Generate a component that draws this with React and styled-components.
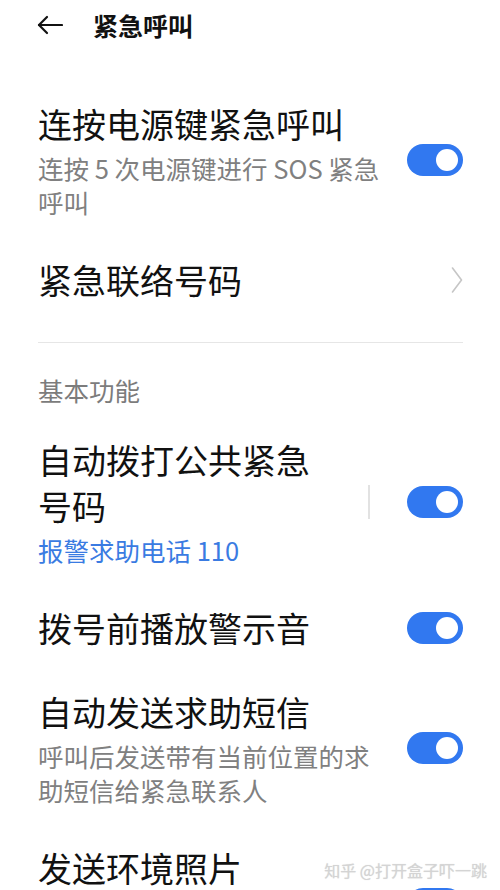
import React from 'react';
import styled, { createGlobalStyle } from 'styled-components';

const GlobalStyle = createGlobalStyle`
  html, body {
    margin: 0;
    padding: 0;
    background: #ffffff;
  }
  body {
    font-family: "Noto Sans CJK SC", "Noto Sans", sans-serif;
    color: #111111;
  }
`;

const Page = styled.div`
  position: relative;
  width: 500px;
  height: 890px;
  overflow: hidden;
  background: #ffffff;
`;

const Header = styled.div`
  display: flex;
  align-items: center;
  height: 50px;
  padding-left: 37px;
`;

const BackButton = styled.div`
  display: flex;
  align-items: center;
  width: 26px;
  height: 26px;
  margin-right: 30px;
`;

const HeaderTitle = styled.h1`
  margin: 0;
  font-size: 25px;
  font-weight: 700;
  line-height: 34px;
  color: #111111;
`;

const Content = styled.div`
  padding-top: 32px;
`;

const Row = styled.div`
  display: flex;
  align-items: center;
  padding: 19px 37px 19px 38px;
`;

const TextCol = styled.div`
  flex: 1;
  min-width: 0;
  padding-right: ${({ $pr }) => $pr || 24}px;
`;

const Title = styled.div`
  font-size: 34px;
  line-height: 46px;
  color: #111111;
`;

const Sub = styled.div`
  margin-top: 4px;
  font-size: 25.5px;
  line-height: 34px;
  color: ${({ $blue }) => ($blue ? '#3a7be2' : '#808080')};
`;

const Divider = styled.div`
  height: 1px;
  margin: 20px 37px 0 38px;
  background: #e6e6e6;
`;

const SectionTitle = styled.div`
  margin: 30px 0 11px 38px;
  font-size: 25.5px;
  line-height: 34px;
  color: #7c7c7c;
`;

const VSep = styled.div`
  width: 2px;
  height: 34px;
  margin-right: 37px;
  background: #e2e2e2;
`;

const Switch = styled.div`
  flex: 0 0 auto;
  display: flex;
  align-items: center;
  justify-content: ${({ $on }) => ($on ? 'flex-end' : 'flex-start')};
  width: 56px;
  height: 32px;
  padding: 0 5px;
  box-sizing: border-box;
  border-radius: 16px;
  background: ${({ $on }) => ($on ? '#3178f0' : '#d9d9d9')};
`;

const Knob = styled.div`
  width: 22px;
  height: 22px;
  border-radius: 50%;
  background: #ffffff;
`;

const Chevron = styled.div`
  display: flex;
  align-items: center;
  width: 12px;
`;

const Watermark = styled.div`
  position: absolute;
  right: 13px;
  top: 858px;
  font-size: 16px;
  line-height: 24px;
  color: #d4d4d4;
  text-shadow: 0 0 1px rgba(0, 0, 0, 0.15);
`;

const Toggle = ({ on = true }) => (
  <Switch $on={on}>
    <Knob />
  </Switch>
);

const App = () => (
  <Page>
    <GlobalStyle />
    <Header>
      <BackButton>
        <svg width="26" height="20" viewBox="0 0 26 20" fill="none" stroke="#111" strokeWidth="2.2" strokeLinecap="round" strokeLinejoin="round">
          <path d="M25 10H2" />
          <path d="M10 2L2 10l8 8" />
        </svg>
      </BackButton>
      <HeaderTitle>紧急呼叫</HeaderTitle>
    </Header>

    <Content>
      <Row>
        <TextCol>
          <Title>连按电源键紧急呼叫</Title>
          <Sub>连按 5 次电源键进行 SOS 紧急呼叫</Sub>
        </TextCol>
        <Toggle />
      </Row>

      <Row>
        <TextCol>
          <Title>紧急联络号码</Title>
        </TextCol>
        <Chevron>
          <svg width="12" height="28" viewBox="0 0 12 28" fill="none" stroke="#c6c6c6" strokeWidth="1.6" strokeLinecap="round" strokeLinejoin="round">
            <path d="M1.5 2l9 12-9 12" />
          </svg>
        </Chevron>
      </Row>

      <Divider />
      <SectionTitle>基本功能</SectionTitle>

      <Row>
        <TextCol $pr={40}>
          <Title>自动拨打公共紧急号码</Title>
          <Sub $blue>报警求助电话 110</Sub>
        </TextCol>
        <VSep />
        <Toggle />
      </Row>

      <Row>
        <TextCol>
          <Title>拨号前播放警示音</Title>
        </TextCol>
        <Toggle />
      </Row>

      <Row>
        <TextCol>
          <Title>自动发送求助短信</Title>
          <Sub>呼叫后发送带有当前位置的求助短信给紧急联系人</Sub>
        </TextCol>
        <Toggle />
      </Row>

      <Row>
        <TextCol>
          <Title>发送环境照片</Title>
          <Sub>呼叫后自动拍摄照片并发送给紧急联系人</Sub>
        </TextCol>
        <Toggle />
      </Row>
    </Content>

    <Watermark>知乎 @打开盒子吓一跳</Watermark>
  </Page>
);

export default App;
